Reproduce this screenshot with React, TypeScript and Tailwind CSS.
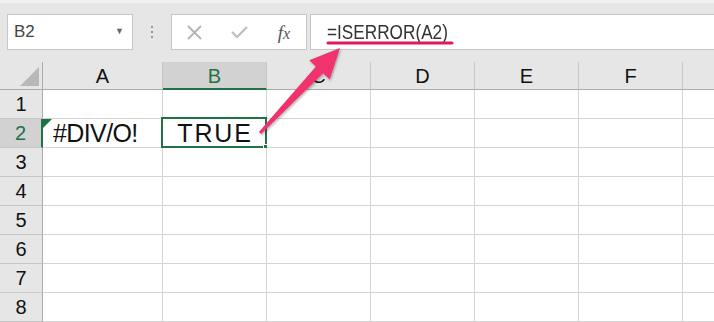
import React from "react";

const cols = ["A", "B", "C", "D", "E", "F"];
const rows = [1, 2, 3, 4, 5, 6, 7, 8];

export default function App() {
  return (
    <div
      className="relative w-[714px] h-[322px] overflow-hidden bg-[#e6e6e6]"
      style={{ fontFamily: '"Liberation Sans", Arial, sans-serif' }}
    >
      {/* top band */}
      <div className="h-[62px] border-t-[3px] border-[#f0f0f0]">
        <div className="mt-[11px] flex h-[36px] items-stretch">
          <div className="ml-[7px] flex w-[126px] items-center justify-between border border-[#c6c6c6] bg-white pl-[6px] pr-[8px]">
            <span className="text-[17px] text-[#444]">B2</span>
            <span className="text-[9px] text-[#666]">▼</span>
          </div>
          <div className="flex w-[38px] flex-col items-center justify-center gap-[3px]">
            <div className="h-[2px] w-[2px] bg-[#999]" />
            <div className="h-[2px] w-[2px] bg-[#999]" />
            <div className="h-[2px] w-[2px] bg-[#999]" />
          </div>
          <div className="flex w-[136px] items-center border border-[#c6c6c6] bg-white">
            <div className="flex w-[42px] justify-center pl-[2px]">
              <svg width="15" height="15" viewBox="0 0 15 15">
                <path d="M1 1 L14 14 M14 1 L1 14" stroke="#b3b3b3" strokeWidth="1.8" />
              </svg>
            </div>
            <div className="flex w-[50px] justify-center">
              <svg width="17" height="13" viewBox="0 0 17 13">
                <path d="M1 6 L6 11 L16 1" stroke="#bdbdbd" strokeWidth="2.2" fill="none" />
              </svg>
            </div>
            <div
              className="flex w-[40px] items-baseline justify-center text-[19px] italic leading-none text-[#555]"
              style={{ fontFamily: '"Liberation Serif", "Times New Roman", serif' }}
            >
              <span>f</span>
              <span className="text-[16px]">x</span>
            </div>
          </div>
          <div className="ml-[3px] flex flex-1 items-center border border-r-0 border-[#c6c6c6] bg-white pl-[16px]">
            <span className="inline-block origin-left scale-x-[0.86] whitespace-nowrap text-[20px] text-[#333]">=ISERROR(A2)</span>
          </div>
        </div>
      </div>

      {/* grid */}
      <div className="flex flex-col">
        <div className="flex h-[28px]">
          <div className="relative w-[43px] border-r border-b border-[#ababab] bg-[#e6e6e6]">
            <svg className="absolute left-[20px] top-[5px]" width="19" height="19" viewBox="0 0 19 19">
              <polygon points="19,0 19,19 0,19" fill="#b8b8b8" />
            </svg>
          </div>
          {cols.map((c) => (
            <div
              key={c}
              className={`flex items-center justify-center border-r pt-[1px] text-[20px] ${
                c === "A" ? "w-[120px]" : "w-[104px]"
              } ${
                c === "B"
                  ? "border-b-2 border-r-[#c6c6c6] border-b-[#217346] bg-[#d2d2d2] text-[#217346]"
                  : "border-b border-r-[#c6c6c6] border-b-[#ababab] text-[#111]"
              }`}
            >
              {c}
            </div>
          ))}
          <div className="flex-1 border-b border-[#ababab]" />
        </div>
        {rows.map((r) => (
          <div key={r} className="flex h-[29px]">
            <div
              className={`flex w-[43px] items-center justify-center border-b border-b-[#c6c6c6] text-[20px] ${
                r === 2
                  ? "border-r-2 border-r-[#217346] bg-[#d2d2d2] text-[#217346]"
                  : "border-r border-r-[#ababab] bg-[#e6e6e6] text-[#111]"
              }`}
            >
              {r}
            </div>
            {cols.map((c) => (
              <div
                key={c}
                className={`relative flex items-center border-r border-b border-[#d4d4d4] bg-white ${
                  c === "A" ? "w-[120px]" : "w-[104px]"
                }`}
              >
                {r === 2 && c === "A" && (
                  <>
                    <svg className="absolute left-0 top-0" width="9" height="9" viewBox="0 0 9 9">
                      <polygon points="0,0 9,0 0,9" fill="#1e7145" />
                    </svg>
                    <span className="pl-[10px] pt-[1px] text-[25px] leading-none tracking-[-0.6px] text-[#111]">#DIV/O!</span>
                  </>
                )}
                {r === 2 && c === "B" && (
                  <>
                    <span className="w-full pt-[1px] pl-[1px] text-center text-[25px] leading-none tracking-[1.8px] text-[#111]">TRUE</span>
                    <div className="absolute -left-[2px] -top-[2px] -right-[1px] -bottom-[1px] border-2 border-[#217346]" />
                    <div className="absolute -right-[3px] -bottom-[3px] h-[6px] w-[6px] border border-white bg-[#217346]" />
                  </>
                )}
              </div>
            ))}
            <div className="flex-1 border-b border-[#d4d4d4] bg-white" />
          </div>
        ))}
      </div>

      {/* annotation overlay */}
      <svg className="pointer-events-none absolute left-0 top-0" width="714" height="322" viewBox="0 0 714 322">
        <defs>
          <filter id="sh" x="-20%" y="-20%" width="140%" height="140%">
            <feDropShadow dx="1" dy="1.5" stdDeviation="1.2" floodColor="#000" floodOpacity="0.3" />
          </filter>
        </defs>
        <line x1="328" y1="43" x2="452" y2="43" stroke="#e0195f" strokeWidth="3" strokeLinecap="round" />
        <polygon
          filter="url(#sh)"
          fill="#f0306d"
          points="340,48 329.7,79.4 323.1,73.2 261.1,134 258.9,132 315.9,66.4 309.3,60.2"
        />
      </svg>
    </div>
  );
}
